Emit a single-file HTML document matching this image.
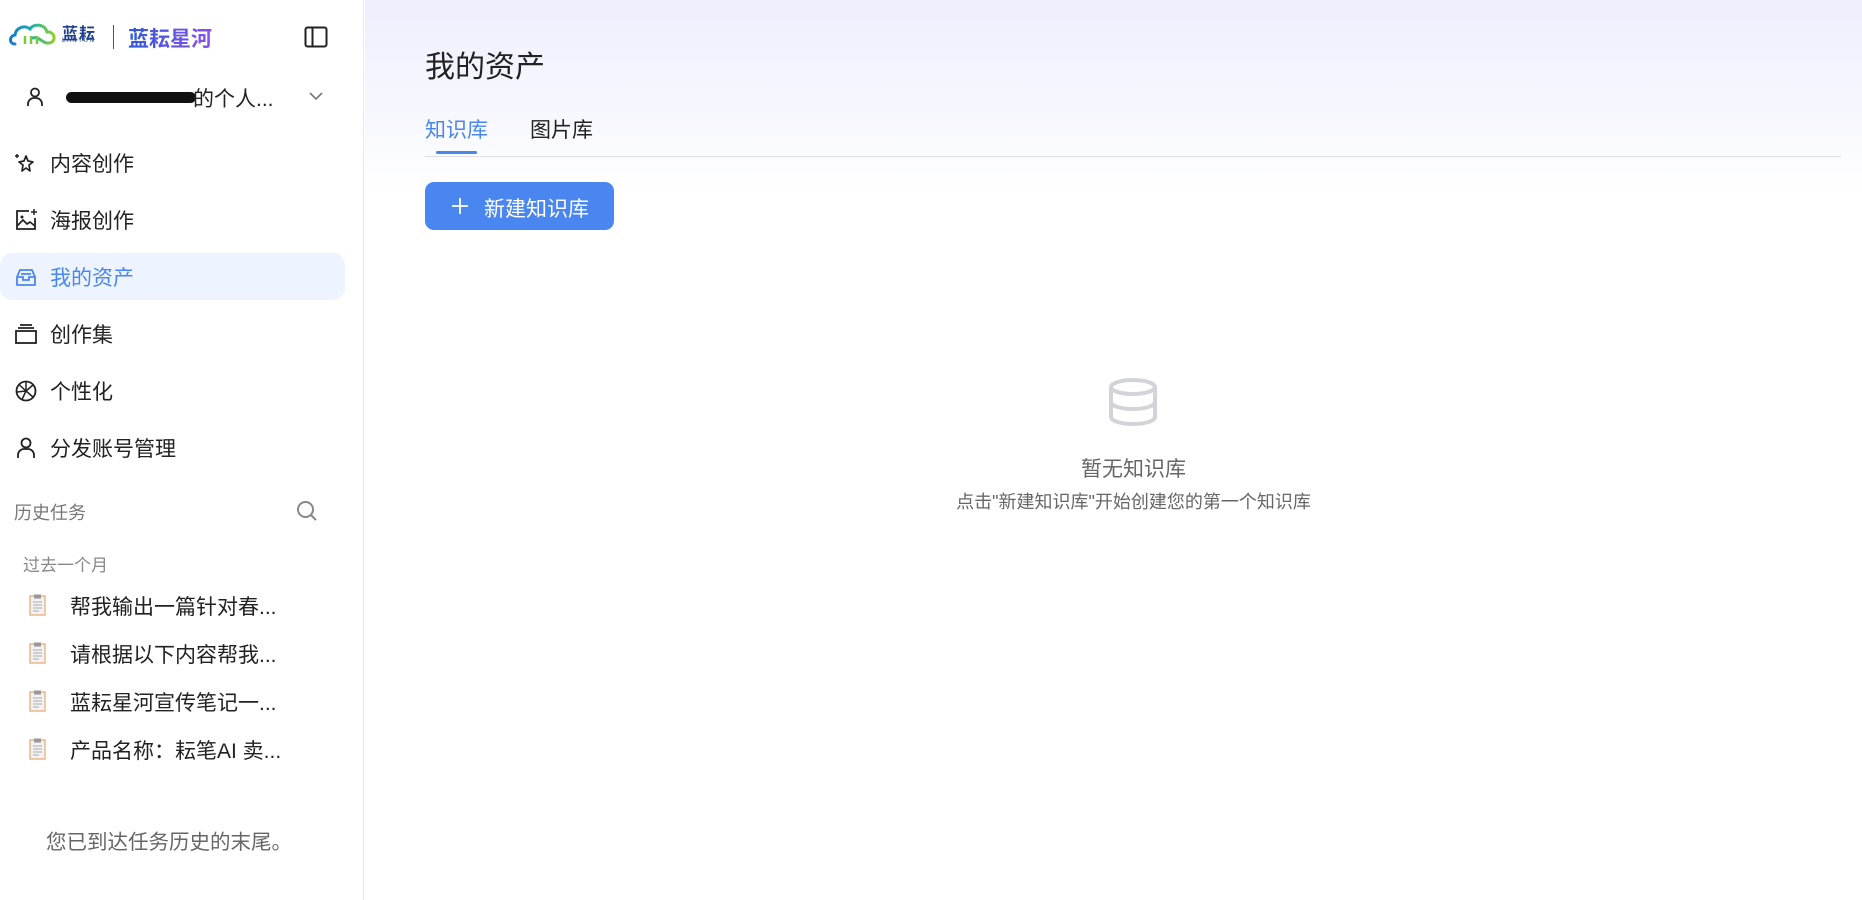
<!DOCTYPE html>
<html><head><meta charset="utf-8"><style>
*{margin:0;padding:0;box-sizing:border-box}
body{width:1862px;height:900px;overflow:hidden;font-family:"Liberation Sans","Noto Sans CJK SC",sans-serif;background:#fff;position:relative;color:#222}
.sb{position:absolute;left:0;top:0;width:364px;height:900px;background:#fff;border-right:1px solid #e8e8ee}
.abs{position:absolute;white-space:nowrap}
.menu{position:absolute;left:0;width:345px;height:47px;display:flex;align-items:center;font-size:21px;color:#222}
.menu svg{position:absolute;left:14px}
.menu span{position:absolute;left:50px}
.hl{background:#edf4ff;border-radius:12px;color:#4a86f0}
.main{position:absolute;left:365px;top:0;right:0;height:900px;background:linear-gradient(180deg,#eeeffd 0px,#f7f8fe 120px,#fff 190px)}
.hist{position:absolute;left:0;width:345px;font-size:21px;color:#222}
.hist .ic{position:absolute;left:29px;top:-11px}
.hist span{position:absolute;left:70px;top:-14px}
</style></head><body>
<div class="sb">
  <svg class="abs" style="left:9px;top:22px" width="48" height="26" viewBox="0 0 48 26"><defs><linearGradient id="cg" x1="0" x2="1"><stop offset="0" stop-color="#1a78c8"/><stop offset="0.5" stop-color="#22b0a8"/><stop offset="1" stop-color="#8cd02c"/></linearGradient></defs><path d="M6 22 C0 22 0 14 6 13 C7 5 16 3 21 7 C25 1 36 2 38 10 C46 9 48 20 40 21 C34 22 30 14 24 16" fill="none" stroke="url(#cg)" stroke-width="3" stroke-linecap="round"/><path d="M16 14v8M22 14v8M28 14v8" stroke="#7cc83a" stroke-width="2.5"/></svg>
  <div class="abs" style="left:62px;top:20px;font-size:16px;font-weight:bold;color:#1f3f8f;letter-spacing:1px">蓝耘</div>
  <div class="abs" style="left:62px;top:38px;font-size:6px;color:#1f3f8f;letter-spacing:1.5px">LANYUN</div>
  <div class="abs" style="left:113px;top:25px;width:1px;height:24px;background:#555"></div>
  <div class="abs" style="left:128px;top:23px;font-size:21px;font-weight:bold;background:linear-gradient(90deg,#2f5bd8,#8a4ff0);-webkit-background-clip:text;color:transparent">蓝耘星河</div>
  <svg class="abs" style="left:304px;top:26px" width="24" height="22" viewBox="0 0 24 22"><rect x="1.5" y="1.5" width="21" height="19" rx="2" fill="none" stroke="#222" stroke-width="2"/><path d="M8.5 2v18" stroke="#222" stroke-width="2"/></svg>

  <svg class="abs" style="left:26px;top:87px" width="18" height="20" viewBox="0 0 18 20"><circle cx="9" cy="5.5" r="4" fill="none" stroke="#222" stroke-width="1.8"/><path d="M2 19v-2a6 6 0 0 1 6-6h2a6 6 0 0 1 6 6v2" fill="none" stroke="#222" stroke-width="1.8"/></svg>
  <div class="abs" style="left:66px;width:130px;height:11px;background:#111;border-radius:6px;top:92px"></div>
  <div class="abs" style="left:193px;top:83px;font-size:21px;color:#222">的个人...</div>
  <svg class="abs" style="left:308px;top:91px" width="16" height="10" viewBox="0 0 16 10"><path d="M2 2l6 6 6-6" fill="none" stroke="#777" stroke-width="1.6"/></svg>

  <div class="menu" style="top:139px"><svg width="24" height="24" viewBox="0 0 24 24"><path d="M12 5l2 5 5 1-4 3 1 6-4-3-4 3 1-6-4-3 5-1z" fill="none" stroke="#222" stroke-width="1.7" stroke-linejoin="round"/><path d="M3 3v4M1 5h4" stroke="#222" stroke-width="1.5"/></svg><span>内容创作</span></div>
  <div class="menu" style="top:196px"><svg width="24" height="24" viewBox="0 0 24 24"><path d="M15 3H3v18h18V10" fill="none" stroke="#222" stroke-width="1.8"/><path d="M3 18l6-6 4 4 3-2 5 4" fill="none" stroke="#222" stroke-width="1.7"/><circle cx="8" cy="9" r="1.5" fill="#222"/><path d="M20 1v6M17 4h6" stroke="#222" stroke-width="1.5"/></svg><span>海报创作</span></div>
  <div class="menu hl" style="top:253px"><svg width="24" height="24" viewBox="0 0 24 24"><path d="M3 12l3-7h12l3 7v8H3z" fill="none" stroke="#4a86f0" stroke-width="1.8" stroke-linejoin="round"/><path d="M3 12h6v3h6v-3h6M7 9h10" fill="none" stroke="#4a86f0" stroke-width="1.8"/></svg><span>我的资产</span></div>
  <div class="menu" style="top:310px"><svg width="24" height="24" viewBox="0 0 24 24"><rect x="2" y="9" width="20" height="12" fill="none" stroke="#222" stroke-width="1.8"/><path d="M4 6h16M6 3h12" stroke="#222" stroke-width="1.8"/></svg><span>创作集</span></div>
  <div class="menu" style="top:367px"><svg width="24" height="24" viewBox="0 0 24 24"><circle cx="12" cy="12" r="9.5" fill="none" stroke="#222" stroke-width="1.8"/><path d="M12 2.5v9.5l7 6M12 12l-9 1M12 12l-4 8.5M5 5.5l7 6.5M19 6l-7 6" fill="none" stroke="#222" stroke-width="1.5"/></svg><span>个性化</span></div>
  <div class="menu" style="top:424px"><svg width="24" height="24" viewBox="0 0 24 24"><circle cx="12" cy="7" r="4.5" fill="none" stroke="#222" stroke-width="1.8"/><path d="M4 22v-3a6 6 0 0 1 6-6h4a6 6 0 0 1 6 6v3" fill="none" stroke="#222" stroke-width="1.8"/></svg><span>分发账号管理</span></div>

  <div class="abs" style="left:14px;top:499px;font-size:18px;color:#777">历史任务</div>
  <svg class="abs" style="left:296px;top:500px" width="22" height="22" viewBox="0 0 22 22"><circle cx="9.5" cy="9.5" r="7.5" fill="none" stroke="#888" stroke-width="2"/><path d="M15 15l5 5" stroke="#888" stroke-width="2"/></svg>
  <div class="abs" style="left:23px;top:551px;font-size:17px;color:#888">过去一个月</div>

  <div class="hist" style="top:605px"><svg class="ic" width="17" height="22" viewBox="0 0 17 22"><rect x="1" y="2" width="15" height="19" fill="#f3f1f4" stroke="#e8b88a" stroke-width="1.5"/><rect x="5" y="0.5" width="7" height="4" fill="#999"/><path d="M4 8h9M4 11h9M4 14h9M4 17h6" stroke="#aaa" stroke-width="1"/></svg><span>帮我输出一篇针对春...</span></div>
  <div class="hist" style="top:653px"><svg class="ic" width="17" height="22" viewBox="0 0 17 22"><rect x="1" y="2" width="15" height="19" fill="#f3f1f4" stroke="#e8b88a" stroke-width="1.5"/><rect x="5" y="0.5" width="7" height="4" fill="#999"/><path d="M4 8h9M4 11h9M4 14h9M4 17h6" stroke="#aaa" stroke-width="1"/></svg><span>请根据以下内容帮我...</span></div>
  <div class="hist" style="top:701px"><svg class="ic" width="17" height="22" viewBox="0 0 17 22"><rect x="1" y="2" width="15" height="19" fill="#f3f1f4" stroke="#e8b88a" stroke-width="1.5"/><rect x="5" y="0.5" width="7" height="4" fill="#999"/><path d="M4 8h9M4 11h9M4 14h9M4 17h6" stroke="#aaa" stroke-width="1"/></svg><span>蓝耘星河宣传笔记一...</span></div>
  <div class="hist" style="top:749px"><svg class="ic" width="17" height="22" viewBox="0 0 17 22"><rect x="1" y="2" width="15" height="19" fill="#f3f1f4" stroke="#e8b88a" stroke-width="1.5"/><rect x="5" y="0.5" width="7" height="4" fill="#999"/><path d="M4 8h9M4 11h9M4 14h9M4 17h6" stroke="#aaa" stroke-width="1"/></svg><span>产品名称：耘笔AI 卖...</span></div>

  <div class="abs" style="left:46px;top:825px;font-size:20.5px;color:#666">您已到达任务历史的末尾。</div>
</div>

<div class="main">
  <div class="abs" style="left:60px;top:42px;font-size:30px;color:#222">我的资产</div>
  <div class="abs" style="left:60px;top:114px;font-size:21px;color:#4a86f0">知识库</div>
  <div class="abs" style="left:165px;top:114px;font-size:21px;color:#222">图片库</div>
  <div class="abs" style="left:71px;top:151px;width:41px;height:3px;background:#4a86f0;border-radius:2px"></div>
  <div class="abs" style="left:60px;top:156px;width:1416px;height:1px;background:#dde0ea"></div>
  <div class="abs" style="left:60px;top:182px;width:189px;height:48px;background:#4a86f0;border-radius:9px;color:#fff;font-size:21px">
    <svg class="abs" style="left:27px;top:16px" width="16" height="16" viewBox="0 0 16 16"><path d="M8 0v16M0 8h16" stroke="#fff" stroke-width="1.8"/></svg>
    <span class="abs" style="left:59px;top:11px">新建知识库</span>
  </div>
  <svg class="abs" style="left:742px;top:378px" width="52" height="48" viewBox="0 0 52 48"><g fill="none" stroke="#d3d4da" stroke-width="4"><ellipse cx="26" cy="9" rx="22" ry="7"/><path d="M4 9v30c0 4 10 7 22 7s22-3 22-7V9"/><path d="M4 24c0 4 10 7 22 7s22-3 22-7"/></g></svg>
  <div class="abs" style="left:0;width:1537px;text-align:center;top:453px;font-size:21px;color:#666">暂无知识库</div>
  <div class="abs" style="left:0;width:1537px;text-align:center;top:488px;font-size:18px;color:#666">点击"新建知识库"开始创建您的第一个知识库</div>
</div>
</body></html>
